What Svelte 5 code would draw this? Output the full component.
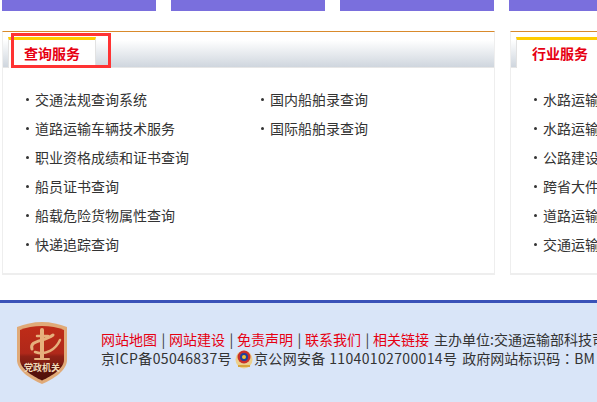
<script>
  const left1 = ['交通法规查询系统','道路运输车辆技术服务','职业资格成绩和证书查询','船员证书查询','船载危险货物属性查询','快递追踪查询'];
  const left2 = ['国内船舶录查询','国际船舶录查询'];
  const right = ['水路运输','水路运输','公路建设','跨省大件','道路运输','交通运输'];
  const links = ['网站地图','网站建设','免责声明','联系我们','相关链接'];
</script>

<div class="page">
  <div class="bars">
    <div class="bar"></div><div class="bar"></div><div class="bar"></div><div class="bar"></div>
  </div>

  <div class="panels">
    <section class="panel">
      <header class="head"><div class="tab">查询服务</div><div class="mark"></div></header>
      <div class="cols">
        <ul class="col">{#each left1 as t}<li>{t}</li>{/each}</ul>
        <ul class="col">{#each left2 as t}<li>{t}</li>{/each}</ul>
      </div>
    </section>
    <section class="panel second">
      <header class="head"><div class="tab">行业服务</div></header>
      <div class="cols">
        <ul class="col">{#each right as t}<li>{t}</li>{/each}</ul>
      </div>
    </section>
  </div>

  <footer class="foot">
    <div class="emblem">
      <svg width="52" height="62" viewBox="0 0 52 62">
        <defs>
          <linearGradient id="sh" x1="0" y1="0" x2="0" y2="1">
            <stop offset="0" stop-color="#bf2c18"/><stop offset=".5" stop-color="#b0281a"/>
            <stop offset=".56" stop-color="#8f2116"/><stop offset=".7" stop-color="#7d1c12"/>
            <stop offset=".72" stop-color="#5f140d"/><stop offset="1" stop-color="#4e0f0a"/>
          </linearGradient>
        </defs>
        <path d="M26 0C17 0 9 2 1 5V38C1 48 14 57 26 62C38 57 51 48 51 38V5C43 2 35 0 26 0Z" fill="#e0aa78"/>
        <path d="M26 4C18 4 10 5.500 4 8V38C4 46 16 54 26 58.500C36 54 48 46 48 38V8C42 5.500 34 4 26 4Z" fill="url(#sh)"/>
        <g fill="none" stroke="#e6b07c" stroke-linecap="round">
          <path d="M26 8V36" stroke-width="4"/>
          <path d="M21 14H32" stroke-width="2.500"/>
          <path d="M16 27C13 18 28 20 37 13" stroke-width="3"/>
          <path d="M19 30C30 34 40 27 44 18" stroke-width="2.500"/>
          <path d="M19 37H33" stroke-width="2"/>
        </g>
      </svg>
      <span class="emblem-text">党政机关</span>
    </div>
    <div class="info">
      <div class="line">
        {#each links as l, i}<span class="lnk">{l}</span>{#if i < links.length - 1}<span class="sep">|</span>{/if}{/each}<span class="org">主办单位:交通运输部科技司</span>
      </div>
      <div class="line">
        <span class="num">京ICP备05046837号</span><svg class="badge" width="18" height="20" viewBox="0 0 18 20">
          <ellipse cx="9" cy="10.500" rx="8.500" ry="9" fill="#ecd08c"/>
          <circle cx="9" cy="8" r="6.500" fill="#c9302a"/>
          <circle cx="9" cy="8" r="4" fill="#1f3f9c"/>
          <circle cx="9" cy="8" r="2" fill="#f1c232"/>
          <path d="M3 17H15" stroke="#d9a43a" stroke-width="2"/>
        </svg><span class="num">京公网安备 11040102700014号</span><span class="reg">政府网站标识码<span class="colon">：</span>BM</span>
      </div>
    </div>
  </footer>
</div>

<style>
  :global(body) { margin: 0; background: #fff; }
  .page {
    width: 597px; height: 402px; overflow: hidden;
    font-family: "Noto Sans CJK SC", "Liberation Sans", sans-serif;
    font-size: 14px; color: #333;
  }
  .bars { display: flex; gap: 15px; padding-left: 2px; height: 11px; }
  .bar { flex: 0 0 154px; background: #7a6fdd; }
  .panels { display: flex; gap: 15px; padding: 20px 0 0 2px; }
  .panel {
    flex: 0 0 493px; min-width: 0; height: 244px; box-sizing: border-box;
    border: 1px solid #eeeeee; border-top: 1px solid #d98a2c; border-bottom-width: 2px;
  }
  .head {
    position: relative; height: 36px; box-sizing: border-box; padding: 5px 0 0 5px;
    background: linear-gradient(#ffffff 0, #ffffff 8px, #cfd6de 100%);
    border-bottom: 1px solid #e6e6e6;
  }
  .tab {
    width: 88px; height: 31px; box-sizing: border-box;
    background: #fff; border: 1px solid #e2e2e2; border-bottom: none;
    border-top: 3px solid #ffcc00;
    color: #e60012; font-weight: 700; line-height: 27px; padding-left: 15px;
  }
  .mark {
    position: absolute; left: 8px; top: 1px; width: 100px; height: 35px; box-sizing: border-box;
    border: 3px solid #ff3333; pointer-events: none;
  }
  .cols { display: flex; padding: 17px 0 0 32px; }
  .col { flex: 0 0 235px; min-width: 0; list-style: none; margin: 0; padding: 0; }
  li { height: 29px; line-height: 29px; position: relative; white-space: nowrap; color: #333; }
  li::before {
    content: ""; position: absolute; left: -9px; top: 13px; width: 3px; height: 3px;
    border-radius: 50%; background: #333;
  }
  .foot {
    margin-top: 25px; height: 102px; box-sizing: border-box;
    background: #d9e5f8; border-top: 3px solid #3a52b8;
    display: flex; padding: 19px 0 0 16px; overflow: hidden;
  }
  .emblem { position: relative; flex: 0 0 52px; height: 62px; }
  .emblem svg { display: block; }
  .emblem-text {
    position: absolute; left: 0; right: 0; top: 40px; text-align: center;
    color: #f0d9b8; font-size: 9px; line-height: 11px; font-weight: 700; white-space: nowrap;
  }
  .info { margin-left: 33px; padding-top: 8px; white-space: nowrap; }
  .line { height: 19px; line-height: 19px; display: flex; align-items: center; }
  .lnk { color: #e60012; }
  .sep { color: #333; padding: 0 4.5px; width: 3px; text-align: center; }
  .org { margin-left: 5px; }
  .num { letter-spacing: 0.35px; }
  .badge { margin: 0 1px 0 3px; flex: none; }
  .reg { margin-left: 5px; }
  .colon { font-family: "Noto Sans CJK TC", sans-serif; }
</style>
